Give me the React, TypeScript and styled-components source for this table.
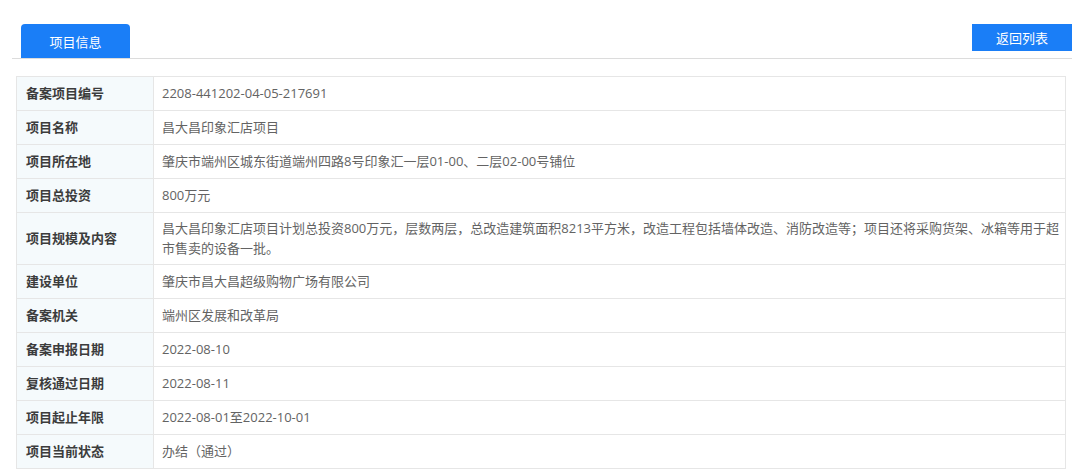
import React from "react";
import styled, { createGlobalStyle } from "styled-components";

const Global = createGlobalStyle`
  html, body { margin: 0; padding: 0; background: #fff; }
  body { font-family: "Open Sans", "Noto Sans CJK SC", "Microsoft YaHei", sans-serif; }
  * { box-sizing: border-box; }
`;

const Page = styled.div`
  padding: 24px 8px 0 12px;
  width: 1080px;
`;

const Header = styled.div`
  display: flex;
  align-items: flex-start;
  justify-content: space-between;
  width: 1060px;
  height: 35px;
  border-bottom: 1px solid #dcdcdc;
  padding-left: 9px;
`;

const Tab = styled.div`
  width: 109px;
  height: 34px;
  background: #1a7ef7;
  border-radius: 4px 4px 0 0;
  color: #fff;
  font-size: 13px;
  display: flex;
  align-items: center;
  justify-content: center;
`;

const BackButton = styled.button`
  width: 100px;
  height: 27px;
  border: none;
  border-radius: 0;
  background: #1a7ef7;
  color: #fff;
  font-family: inherit;
  font-size: 13px;
  padding: 0;
  cursor: pointer;
`;

const Table = styled.table`
  margin: 17px 0 0 4px;
  width: 1050px;
  border-collapse: collapse;
  font-size: 13px;
`;

const Label = styled.th`
  width: 137px;
  height: 34px;
  padding: 6px 9px;
  text-align: left;
  font-weight: 700;
  color: #3c3c3c;
  background: #f5fafc;
  border: 1px solid #e6e6e6;
  line-height: 19.5px;
`;

const Value = styled.td`
  height: 34px;
  padding: 6px 2px 6px 8px;
  color: #636363;
  border: 1px solid #e6e6e6;
  line-height: 19.5px;
`;

const rows: [string, string][] = [
  ["备案项目编号", "2208-441202-04-05-217691"],
  ["项目名称", "昌大昌印象汇店项目"],
  ["项目所在地", "肇庆市端州区城东街道端州四路8号印象汇一层01-00、二层02-00号铺位"],
  ["项目总投资", "800万元"],
  [
    "项目规模及内容",
    "昌大昌印象汇店项目计划总投资800万元，层数两层，总改造建筑面积8213平方米，改造工程包括墙体改造、消防改造等；项目还将采购货架、冰箱等用于超市售卖的设备一批。",
  ],
  ["建设单位", "肇庆市昌大昌超级购物广场有限公司"],
  ["备案机关", "端州区发展和改革局"],
  ["备案申报日期", "2022-08-10"],
  ["复核通过日期", "2022-08-11"],
  ["项目起止年限", "2022-08-01至2022-10-01"],
  ["项目当前状态", "办结（通过）"],
];

export default function App() {
  return (
    <Page>
      <Global />
      <Header>
        <Tab>项目信息</Tab>
        <BackButton>返回列表</BackButton>
      </Header>
      <Table>
        <tbody>
          {rows.map(([k, v]) => (
            <tr key={k}>
              <Label>{k}</Label>
              <Value>{v}</Value>
            </tr>
          ))}
        </tbody>
      </Table>
    </Page>
  );
}
